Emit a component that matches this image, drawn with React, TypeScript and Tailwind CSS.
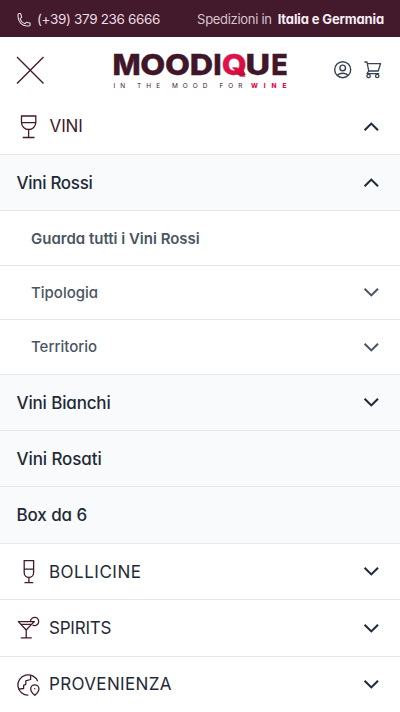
import { ReactNode, useState } from "react";

interface Category {
  id: string;
  label: string;
  icon: ReactNode;
  spacing: string;
}

interface SubCategory {
  id: string;
  label: string;
  expandable: boolean;
  spacing: string;
}

interface LogoLetter {
  char: string;
  x: number;
  width: number;
}

const WineGlassIcon = () => (
  <svg
    className="h-6 w-6"
    viewBox="0 0 24 24"
    fill="none"
    stroke="currentColor"
    strokeWidth="1.3"
  >
    <path d="M5.5 1h14.3v6.5a7.15 7 0 0 1-14.3 0zM5.5 7.7h14.3M12.6 14.5v8M6.7 22.5h11.8" />
  </svg>
);

const FluteIcon = () => (
  <svg
    className="h-6 w-6"
    viewBox="0 0 24 24"
    fill="none"
    stroke="currentColor"
    strokeWidth="1.3"
  >
    <path d="M8.2.7h9.4v12a4.7 4.7 0 0 1-9.4 0zM8.2 9.1h9.4M12.9 17.4v5M8.5 22.6h8.8" />
  </svg>
);

const CocktailIcon = () => (
  <svg
    className="h-6 w-6"
    viewBox="0 0 24 24"
    fill="none"
    stroke="currentColor"
    strokeWidth="1.3"
    strokeLinejoin="round"
  >
    <path d="M2.3 5.6h15.8L10.2 14zM5.2 8.4h10.2M10.2 14v7.6M4.8 21.8h11" />
    <path d="M14.5 5.2a4.1 4.1 0 1 1 2 3.8M17 6.8l1.4-1.5" />
  </svg>
);

const GlobeIcon = () => (
  <svg
    className="h-6 w-6"
    viewBox="0 0 24 24"
    fill="none"
    stroke="currentColor"
    strokeWidth="1.3"
    strokeLinejoin="round"
  >
    <path d="M21.6 8.3A10.2 10.2 0 1 0 12.3 22.2" />
    <path d="M14.6 2.4v4.1l-4.8 1.4v3.4l-2.2 1.1v3.1l-5 .7" />
    <path d="M18.8 22.2s-4.1-3.6-4.1-6.3a4.1 4.1 0 0 1 8.2 0c0 2.7-4.1 6.3-4.1 6.3z" />
    <circle cx="18.8" cy="15.7" r=".7" fill="currentColor" stroke="none" />
  </svg>
);

const PhoneIcon = () => (
  <svg
    className="h-[14px] w-[14px]"
    viewBox="0 0 24 24"
    fill="none"
    stroke="currentColor"
    strokeWidth="1.9"
    strokeLinejoin="round"
  >
    <path d="M1.8 6.2c0 9 7.2 16.2 16.2 16.2h2.4c1.2 0 2.1-1 2.1-2.1v-2.1c0-.6-.4-1.1-1-1.2l-4.8-1.2c-.5-.1-1 .1-1.3.5l-1.1 1.4c-.3.4-.9.6-1.3.4a13 13 0 0 1-7.6-7.6c-.2-.5 0-1 .4-1.3L7.3 8c.4-.3.6-.8.5-1.3L6.6 1.9c-.2-.6-.7-1-1.3-1H3.9c-1.2 0-2.1.9-2.1 2.1z" />
  </svg>
);

const ProfileIcon = () => (
  <svg
    className="h-[18px] w-[18px]"
    viewBox="0 0 18 18"
    fill="none"
    stroke="currentColor"
    strokeWidth="1.4"
  >
    <circle cx="8.7" cy="8.7" r="8" />
    <circle cx="8.7" cy="6.9" r="2.8" />
    <path d="M3.4 14.4c1-1.5 3-2.2 5.3-2.2s4.3.7 5.3 2.2" />
  </svg>
);

const CartIcon = () => (
  <svg
    className="h-[18px] w-[18px]"
    viewBox="0 0 18 18"
    fill="none"
    stroke="currentColor"
    strokeWidth="1.3"
    strokeLinejoin="round"
  >
    <path d="M.4 1h2.6l1.7 9h9.5l2.3-7.3H3.4M4.7 10l-1.700 2.600h12.200" />
    <circle cx="4.6" cy="15" r="1.7" />
    <circle cx="13.2" cy="15" r="1.7" />
  </svg>
);

const Chevron = ({ open }: { open: boolean }) => (
  <svg
    className="h-[10px] w-4"
    viewBox="0 0 16 10"
    fill="none"
    stroke="currentColor"
    strokeWidth="2.1"
  >
    <path d={open ? "M1.6 8.2 8.3 1.6l6.7 6.6" : "M1.6 1.8 8.3 8.4l6.7-6.6"} />
  </svg>
);

const logoLetters: LogoLetter[] = [
  { char: "M", x: 112.4, width: 28.2 },
  { char: "O", x: 140.2, width: 25 },
  { char: "O", x: 165.1, width: 25 },
  { char: "D", x: 189.7, width: 23.4 },
  { char: "I", x: 213.3, width: 8.4 },
  { char: "Q", x: 221.8, width: 25 },
  { char: "U", x: 245.4, width: 24.6 },
  { char: "E", x: 271.3, width: 16.5 },
];

const Logo = () => (
  <svg
    className="h-11 w-[176px] overflow-visible"
    viewBox="112 47.7 176 44"
  >
    <defs>
      <linearGradient id="q" x1="0" y1="0" x2="1" y2="1">
        <stop offset="0.2" stopColor="#ea124d" />
        <stop offset="0.65" stopColor="#d80e45" />
        <stop offset="1" stopColor="#b00f3c" />
      </linearGradient>
    </defs>
    <g fontFamily="Inter, sans-serif" fontWeight="800" fontSize="29">
      {logoLetters.map(({ char, x, width }) => (
        <text
          key={x}
          x={x}
          y="74.3"
          textLength={width}
          lengthAdjust="spacingAndGlyphs"
          fill={char === "Q" ? "url(#q)" : "#3f1729"}
          stroke={char === "Q" ? "url(#q)" : "#3f1729"}
          strokeWidth="0.4"
        >
          {char}
        </text>
      ))}
    </g>
    <path d="M243.4 69.5l2.4 5.1h-9z" fill="#c20e40" />
    <g fontFamily="Inter, sans-serif" fontSize="6.5">
      <text x="113.5" y="88" textLength="129" fill="#3f1729">
        IN THE MOOD FOR
      </text>
      <text x="251" y="88" textLength="35.5" fontWeight="800" fill="#e30b4b">
        WINE
      </text>
    </g>
  </svg>
);

const categories: Category[] = [
  {
    id: "bollicine",
    label: "BOLLICINE",
    icon: <FluteIcon />,
    spacing: "tracking-[0.5px]",
  },
  {
    id: "spirits",
    label: "SPIRITS",
    icon: <CocktailIcon />,
    spacing: "tracking-[-0.2px]",
  },
  {
    id: "provenienza",
    label: "PROVENIENZA",
    icon: <GlobeIcon />,
    spacing: "tracking-[0.35px]",
  },
];

const subCategories: SubCategory[] = [
  {
    id: "bianchi",
    label: "Vini Bianchi",
    expandable: true,
    spacing: "tracking-[-0.15px]",
  },
  {
    id: "rosati",
    label: "Vini Rosati",
    expandable: false,
    spacing: "tracking-[-0.1px]",
  },
  {
    id: "box",
    label: "Box da 6",
    expandable: false,
    spacing: "tracking-[-0.1px]",
  },
];

const App = () => {
  const [isViniOpen, setIsViniOpen] = useState<boolean>(true);
  const [isRossiOpen, setIsRossiOpen] = useState<boolean>(true);

  return (
    <div className="h-[712px] w-[400px] overflow-hidden bg-white font-[Inter,sans-serif] text-[#1f2a37] [font-feature-settings:'cv11','ss03']">
      <div className="flex h-[37px] items-center justify-between bg-[#43192c] pt-0.5 pr-4 pl-[17px] text-[#eadde3]">
        <a href="tel:+393792366666" className="flex items-center gap-[6px]">
          <PhoneIcon />
          <span className="text-[13.5px] tracking-[-0.35px]">
            (+39) 379 236 6666
          </span>
        </a>
        <p className="flex gap-[6px] text-[13px] whitespace-nowrap">
          <span className="tracking-[-0.3px] text-[#d8c5cf]">
            Spedizioni in
          </span>
          <span className="font-bold tracking-[-0.13px] text-[#f8edf3]">
            Italia e Germania
          </span>
        </p>
      </div>
      <header className="flex h-[62px] items-center justify-between pr-[18px] pb-0.5 pl-4">
        <button aria-label="Chiudi" className="pt-1.5">
          <svg
            className="h-7 w-7 text-[#43192c]"
            viewBox="0 0 28 28"
            stroke="currentColor"
            strokeWidth="1.4"
          >
            <path d="M1 1l26.5 26.5M27.5 1L1 27.5" />
          </svg>
        </button>
        <div className="ml-[22px] pt-1.5">
          <Logo />
        </div>
        <div className="flex gap-3 pt-1.5 text-[#364253]">
          <ProfileIcon />
          <CartIcon />
        </div>
      </header>
      <nav>
        <button
          onClick={() => setIsViniOpen((prev) => !prev)}
          className="flex h-[56px] w-full items-center border-b border-[#e5e7eb] pr-[21px] pl-4"
        >
          <span className="text-[#43192c]">
            <WineGlassIcon />
          </span>
          <span className="ml-[9.5px] flex-1 text-left text-[17px] tracking-[-0.1px] text-[#43192c]">
            VINI
          </span>
          <Chevron open={isViniOpen} />
        </button>
        {isViniOpen && (
          <>
            <button
              onClick={() => setIsRossiOpen((prev) => !prev)}
              className="flex h-[56.4px] w-full items-center justify-between border-b border-[#e5e7eb] bg-[#f9fafb] pr-[21px] pl-[16.5px] text-[17px] font-medium"
            >
              <span className="pt-0.5 tracking-[-0.3px]">Vini Rossi</span>
              <Chevron open={isRossiOpen} />
            </button>
            {isRossiOpen && (
              <div className="text-[15px] text-[#4b5563]">
                <div className="flex h-[54.4px] items-center border-b border-[#e5e7eb] pl-[31px] font-semibold">
                  <span className="pt-0.5">Guarda tutti i Vini Rossi</span>
                </div>
                <div className="flex h-[54.4px] items-center justify-between border-b border-[#e5e7eb] pr-[21px] pl-[31px] font-medium">
                  <span className="pt-px">Tipologia</span>
                  <Chevron open={false} />
                </div>
                <div className="flex h-[54.4px] items-center justify-between border-b border-[#e5e7eb] pr-[21px] pl-[31px] font-medium">
                  <span className="pt-px">Territorio</span>
                  <Chevron open={false} />
                </div>
              </div>
            )}
            {subCategories.map((item) => (
              <div
                key={item.id}
                className="flex h-[56.4px] items-center justify-between border-b border-[#e5e7eb] bg-[#f9fafb] pr-[21px] pl-[16.5px] text-[17px] font-medium"
              >
                <span className="pt-0.5">
                  <span className={item.spacing}>{item.label}</span>
                </span>
                {item.expandable && <Chevron open={false} />}
              </div>
            ))}
          </>
        )}
        {categories.map((category) => (
          <div
            key={category.id}
            className="flex h-[56.4px] items-center border-b border-[#e5e7eb] pr-[21px] pl-4 text-[17px]"
          >
            <span className="pt-px text-[#43192c]">{category.icon}</span>
            <span className="ml-[9px] flex-1 pt-0.5">
              <span className={category.spacing}>{category.label}</span>
            </span>
            <Chevron open={false} />
          </div>
        ))}
      </nav>
    </div>
  );
};

export default App;
